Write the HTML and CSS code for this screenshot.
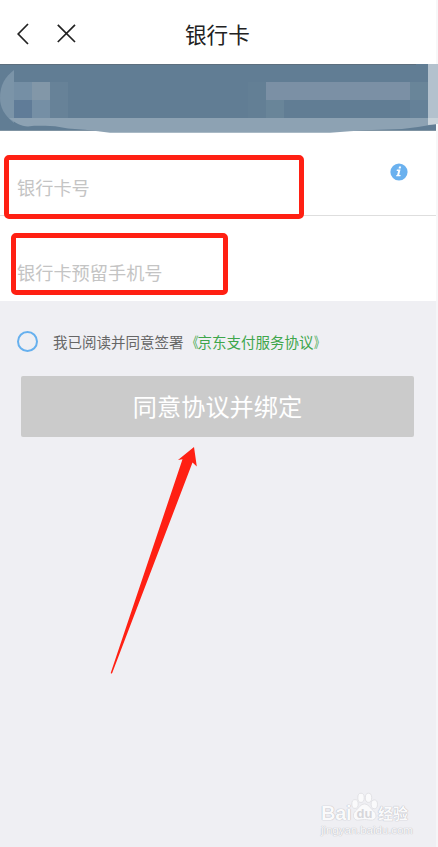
FILE: index.html
```html
<!DOCTYPE html>
<html lang="zh-CN">
<head>
<meta charset="utf-8">
<title>银行卡</title>
<link rel="stylesheet" href="styles.css">
</head>
<body>
<main class="screen">
  <header class="nav">
    <div class="nav-actions">
      <svg class="icon-back" width="12" height="22" viewBox="0 0 12 22"><path d="M11 1 1.2 11 11 21"/></svg>
      <svg class="icon-close" width="19" height="19" viewBox="0 0 19 19"><path d="M.8.8 18 18M18 .8.8 18"/></svg>
    </div>
    <h1 class="title">银行卡</h1>
  </header>
  <svg class="banner" width="438" height="70" viewBox="0 0 438 70">
    <path fill="#617d94" d="M0 0H436V66H0z"/>
    <path fill="#5d6f7e" d="M0 0H416V1H0z"/>
    <path fill="#7f93a2" d="M0 66H98V67H0zM350 66H436V67H350z"/>
    <path fill="#7b94a8" d="M14 6C5 13 0 21 0 34 0 43 4 51 14 59z"/>
    <path fill="#758fa5" d="M14 18h18v18H14zM32 36h18v18H32z"/>
    <path fill="#8297a8" d="M32 18h18v18H32z"/>
    <path fill="#607c98" d="M14 36h18v18H14z"/>
    <path fill="#678298" d="M50 18h18v36H50z"/>
    <path fill="#637f95" d="M248 18h18v36h-18z"/>
    <path fill="#7b90a5" d="M266 18h144v18H266z"/>
    <path fill="#698599" d="M266 36h18v18h-18zM410 18h18v18h-18z"/>
    <path fill="#658198" d="M410 36h18v18h-18z"/>
    <path fill="#8da2b3" d="M9 54H436V60L418 63 402 65 365 66.3 350 67.3 330 68.8H110L98 67.2 85 65.8 68 64.5 55 62.3 45 61.8H34L28 62.5C21 62 15 59 9 54z"/>
    <path fill="#b3c1cd" d="M428 0h10v54h-10z"/>
    <path fill="#c9d3da" d="M428 54h10v6l-10 1z"/>
    <path fill="#f7f8f9" d="M436 60h2v10h-2z"/>
  </svg>
  <section class="form">
    <div class="field field-card">
      <span>银行卡号</span>
      <svg class="icon-info" width="18" height="18" viewBox="0 0 18 18"><circle cx="9" cy="9" r="8.6" fill="#6ab1ef"/><path fill="#fff" d="M9 3.4h2.1L10.7 5.4H8.6zM6.9 6.6h3.6L9.2 12h1.5l-.3 1.3H6.1l.3-1.3h.7l1-4.1H6.6z"/></svg>
    </div>
    <div class="field field-phone"><span>银行卡预留手机号</span></div>
  </section>
  <section class="confirm">
    <div class="agreement">
      <i class="radio"></i>
      <span>我已阅读并同意签署<a class="link"><span class="quote-open">《</span>京东支付服务协议<span class="quote-close">》</span></a></span>
    </div>
    <div class="submit">同意协议并绑定</div>
  </section>
  <div class="mark mark-card"></div>
  <div class="mark mark-phone"></div>
  <svg class="arrow" width="90" height="230" viewBox="0 0 90 230"><path fill="#ff2013" d="M84 0 86.8 19.5 82.5 15.5 2.2 226Q1.3 227 .7 226L72.5 12.2 68 13z"/></svg>
  <div class="watermark">
    <div class="brand">
      <span class="bai">Bai</span>
      <svg class="paw" width="27" height="30" viewBox="0 0 27 30">
        <g fill="#fafafb" stroke="#dddde1" stroke-width=".8"><ellipse cx="4" cy="12" rx="3.2" ry="4.4"/><ellipse cx="10" cy="5.8" rx="3.2" ry="4.6"/><ellipse cx="17.5" cy="5.8" rx="3.2" ry="4.6"/><ellipse cx="23.3" cy="12.3" rx="3.2" ry="4.4"/><path d="M13.5 12C9.5 12 8 16 4.5 19 1 22 2 28 6.5 28.2 9 28.3 11 27.5 13.5 27.5S19 28.4 21.5 28C26 27 26 22 22.5 19 19 16 17.5 12 13.5 12z"/></g>
        <text x="13.5" y="26" text-anchor="middle" class="du">du</text>
      </svg>
      <span class="exp">经验</span>
    </div>
    <div class="site">jingyan.baidu.com</div>
  </div>
</main>
</body>
</html>
```
FILE: styles.css
```css
* { box-sizing: border-box; }
body { margin: 0; font-family: "Noto Sans CJK SC", sans-serif; }
.screen {
  position: relative;
  width: 438px;
  height: 847px;
  overflow: hidden;
  background: linear-gradient(to right, #efeff3 436px, #f5f5f7 436px);
}
svg { display: block; flex: none; }
.nav {
  display: grid;
  grid-template-columns: 185px 1fr;
  align-items: center;
  height: 64px;
  padding-top: 4px;
  background: linear-gradient(to right, #fff 436px, #f7f7f8 436px);
}
.nav-actions { display: flex; align-items: center; gap: 28px; padding-left: 16.5px; margin-top: -1px; }
.nav path { fill: none; stroke: #222; stroke-width: 1.7; }
.title { margin: -1px 0 0; font-size: 21.6px; font-weight: 400; line-height: 32px; color: #222; }
.banner { background: #fff; }
.form { height: 167px; background: linear-gradient(to right, #fff 436px, #f7f7f8 436px); }
.field {
  display: flex;
  justify-content: space-between;
  margin-right: 2px;
  padding-left: 17px;
  font-size: 18.2px;
  line-height: 28px;
  color: #c4c4c4;
}
.field-card { height: 82px; padding-top: 39px; padding-right: 28px; border-bottom: 1px solid #dedede; }
.icon-info { margin-top: -10px; }
.field-phone { height: 85px; padding-top: 42px; }
.confirm { padding: 27px 24px 0 17px; }
.agreement { display: flex; align-items: center; gap: 15px; height: 26px; font-size: 14.5px; color: #666; white-space: nowrap; }
.radio { flex: none; width: 21px; height: 21px; margin-top: 1px; border: 2px solid #66b0ee; border-radius: 50%; }
.link { color: #3ea64b; }
.quote-open, .quote-close { display: inline-block; width: 14.5px; }
.quote-open { margin-right: -.5px; transform: scaleX(.8); transform-origin: right; }
.quote-close { transform: scaleX(.7); transform-origin: left; }
.submit {
  height: 61px;
  margin: 22px 0 0 4px;
  border-radius: 2px;
  background: #cbcbcb;
  color: #fff;
  font-size: 24.2px;
  line-height: 60px;
  text-align: center;
}
.mark { position: absolute; border: 5px solid #ff2013; border-radius: 5px; }
.mark-card { left: 4px; top: 155px; width: 300px; height: 64px; }
.mark-phone { left: 11px; top: 233px; width: 217px; height: 62px; }
.arrow { position: absolute; left: 110px; top: 447px; }
.watermark { position: absolute; left: 321px; top: 792px; color: #fafafb; }
.brand { display: flex; align-items: flex-end; height: 31px; }
.bai, .exp { text-shadow: 0 0 1px #b8b8c0, 0 0 1px #b8b8c0; }
.bai { width: 30px; font: bold 20px/20px "Liberation Sans", sans-serif; letter-spacing: -.3px; }
.paw { margin-bottom: 1px; }
.exp { font-size: 15px; line-height: 18px; font-weight: 700; margin-bottom: 1px; }
.du { font: bold 13px "Liberation Sans", sans-serif; fill: #d6d6da; }
.site {
  margin-top: 1px;
  font: 11.5px/12px "Liberation Sans", sans-serif;
  letter-spacing: -.05px;
  color: #fafafb;
  text-shadow: 0 0 1px #b4b4bc, 0 0 1px #c4c4ca;
}
```
